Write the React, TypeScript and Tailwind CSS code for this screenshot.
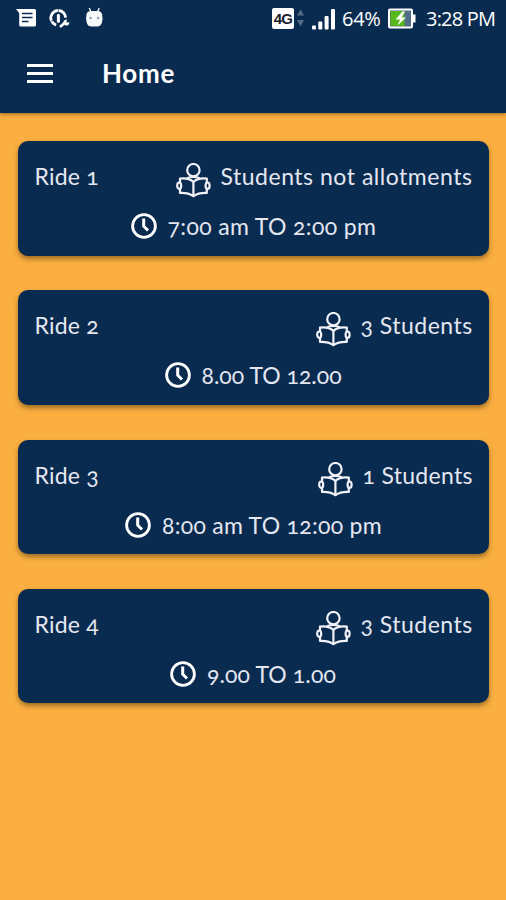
import React from "react";

type Ride = {
  name: string;
  students: string;
  studentsBox: string;
  time: string;
  timeBox: string;
};

const rides: Ride[] = [
  { name: "Ride 1", students: "Students not allotments", studentsBox: "w-[251px] tracking-[0.52px]", time: "7:00 am TO 2:00 pm", timeBox: "w-[208px] tracking-[0.36px]" },
  { name: "Ride 2", students: "3 Students", studentsBox: "w-[111px] tracking-[0.5px]", time: "8.00 TO 12.00", timeBox: "w-[140px]" },
  { name: "Ride 3", students: "1 Students", studentsBox: "w-[109px] tracking-[0.3px]", time: "8:00 am TO 12:00 pm", timeBox: "w-[219px] tracking-[0.27px]" },
  { name: "Ride 4", students: "3 Students", studentsBox: "w-[111px] tracking-[0.5px]", time: "9.00 TO 1.00", timeBox: "w-[129px] tracking-[0.1px]" },
];

function ReaderIcon() {
  return (
    <svg className="mt-px block h-[35px] w-[35px] shrink-0" viewBox="0 0 35 35" fill="none" stroke="#f1f3f8" strokeWidth="2.2" strokeLinejoin="round" strokeLinecap="round">
      <circle cx="17.4" cy="7.2" r="6.2" />
      <path d="M11.5 15.200C14 13.400 20.800 13.400 23.300 15.200" />
      <path d="M4 19.500V15.600C9 15 14 16 17.400 18.800C20.800 16 25.800 15 30.800 15.600V19.500" />
      <path d="M4 26V30C9 29.800 14 30.800 17.400 33.200C20.800 30.800 25.800 29.800 30.800 30V26" />
      <path d="M17.400 18.800V33" />
      <ellipse cx="3.200" cy="22.700" rx="2" ry="3.200" />
      <ellipse cx="31.600" cy="22.700" rx="2" ry="3.200" />
    </svg>
  );
}

function ClockIcon() {
  return (
    <svg className="mt-px block h-[26px] w-[26px] shrink-0" viewBox="0 0 26 26" fill="none" stroke="#fff">
      <circle cx="13" cy="13" r="11.400" strokeWidth="2.800" />
      <path d="M12.700 5.500V13.200L17 17.500" strokeWidth="3" />
    </svg>
  );
}

function StatusBar() {
  return (
    <div className="flex h-9 items-center pl-4 pr-[10px] text-white [font-variant-numeric:lining-nums]">
      <svg className="h-[18px] w-5" viewBox="0 0 20 18">
        <path d="M0 0H18.500Q20 0 20 1.500V16Q20 17.500 18.500 17.500H5Q3.200 17.500 3.200 16V4Z" fill="#fff" />
        <path d="M6 4.500H16.500M6 8.500H16.500M6 12.500H12.500" stroke="#0a2b50" strokeWidth="1.500" />
      </svg>
      <svg className="ml-[13px] h-[19px] w-[21px]" viewBox="0 0 21 19" fill="none" stroke="#fff">
        <path d="M7.200 16A7.400 7.400 0 1 1 16.600 8.600" strokeWidth="2.800" />
        <path d="M1.500 12.500L5 11M9.300 0V3" stroke="#0a2b50" strokeWidth=".7" />
        <path d="M9.400 6.200V12.200" strokeWidth="3" strokeLinecap="round" />
        <path d="M11 18L15.500 14" strokeWidth="2.600" />
        <path d="M18 10.700A3 3 0 1 0 20.300 13.300L17.300 13.400Z" fill="#fff" stroke="none" />
      </svg>
      <svg className="mb-0.5 ml-[15px] h-5 w-[19px]" viewBox="0 0 19 20">
        <path d="M4.300 1L6 5M14.200 1L12.500 5" stroke="#fff" strokeWidth="1.300" />
        <path d="M1.500 7Q2.500 4 6 4H12.500Q16 4 17 7Q18.200 12 16.800 16Q15.500 19.500 12 19.500H6.500Q3 19.500 1.800 16Q.5 12 1.500 7Z" fill="#f8f9fb" />
        <circle cx="5.500" cy="11" r="1.200" fill="#8d9aaa" />
        <circle cx="13" cy="11" r="1.200" fill="#8d9aaa" />
      </svg>
      <div className="ml-auto flex items-center">
        <span className="flex h-[21px] w-[22px] items-center justify-center rounded-[2px] bg-white font-['Liberation_Sans',sans-serif] text-[15px] font-bold leading-none tracking-[-0.7px] text-[#18202c]">4G</span>
        <svg className="ml-[3px] h-5 w-[7px]" viewBox="0 0 7 20" fill="#536c86">
          <path d="M3.500 1.500L7 7.500H0ZM3.500 18.500L0 12H7Z" />
        </svg>
        <svg className="ml-2 mt-0.5 h-[22px] w-6" viewBox="0 0 24 22" fill="#fff">
          <rect x="0" y="17.500" width="4" height="4" rx="1" />
          <rect x="6.300" y="13.500" width="4" height="8" rx="1" />
          <rect x="12.600" y="8" width="4" height="13.500" rx="1" />
          <rect x="19" y="1" width="4" height="20.500" rx="1" />
        </svg>
        <span className="ml-1.5 mt-px w-[41px] whitespace-nowrap font-['Open_Sans',sans-serif] text-[20px] leading-none tracking-[-0.3px]">64%</span>
        <svg className="ml-[5px] h-[21px] w-7" viewBox="0 0 28 21">
          <rect x="1" y="1.500" width="23" height="18" rx="1" fill="#526c86" stroke="#fff" strokeWidth="2" />
          <rect x="25" y="6.500" width="2.500" height="8" fill="#fff" />
          <rect x="2.500" y="3" width="14" height="15" fill="#56b81b" />
          <path d="M14.500 3.500L7.500 11.500H12L9.500 17.500L18 9.500H13.500L17 3.500Z" fill="#fff" />
        </svg>
        <span className="ml-2.5 mt-px w-[70px] whitespace-nowrap font-['Open_Sans',sans-serif] text-[20px] leading-none tracking-[-0.8px]">3:28 PM</span>
      </div>
    </div>
  );
}

function RideCard({ ride }: { ride: Ride }) {
  return (
    <article className="h-[114.500px] rounded-[10px] bg-[#0a2b50] px-[17px] pt-[21px] text-[23px] leading-[29px] text-[#e4e7f0] shadow-[0_3px_5px_rgba(70,45,10,0.5)]">
      <div className="flex h-[35px] items-start">
        <span className="whitespace-nowrap tracking-[0.2px]">{ride.name}</span>
        <div className="ml-auto flex items-start gap-[10px]">
          <ReaderIcon />
          <span className={`${ride.studentsBox} whitespace-nowrap`}>{ride.students}</span>
        </div>
      </div>
      <div className="mt-[15px] flex items-start justify-center gap-[11px]">
        <ClockIcon />
        <span className={`${ride.timeBox} whitespace-nowrap`}>{ride.time}</span>
      </div>
    </article>
  );
}

export default function App() {
  return (
    <div className="flex h-[900px] w-[506px] flex-col overflow-hidden bg-[#fbaf41] font-[Lato,sans-serif] [font-variant-numeric:oldstyle-nums]">
      <header className="relative h-[112.600px] shrink-0 bg-[#0a2b50] shadow-[0_1px_4px_rgba(70,45,10,0.6)]">
        <StatusBar />
        <div className="flex h-[74px] items-center pl-[27px]">
          <button aria-label="Menu" className="flex flex-col gap-[5px]">
            <span className="h-[3px] w-[26px] bg-white" />
            <span className="h-[3px] w-[26px] bg-white" />
            <span className="h-[3px] w-[26px] bg-white" />
          </button>
          <h1 className="ml-[49px] text-[26px] font-bold tracking-[0.7px] text-white">Home</h1>
        </div>
      </header>
      <main className="flex flex-col gap-[34.700px] px-[17.500px] pt-[28.600px]">
        {rides.map((ride) => (
          <RideCard key={ride.name} ride={ride} />
        ))}
      </main>
    </div>
  );
}
